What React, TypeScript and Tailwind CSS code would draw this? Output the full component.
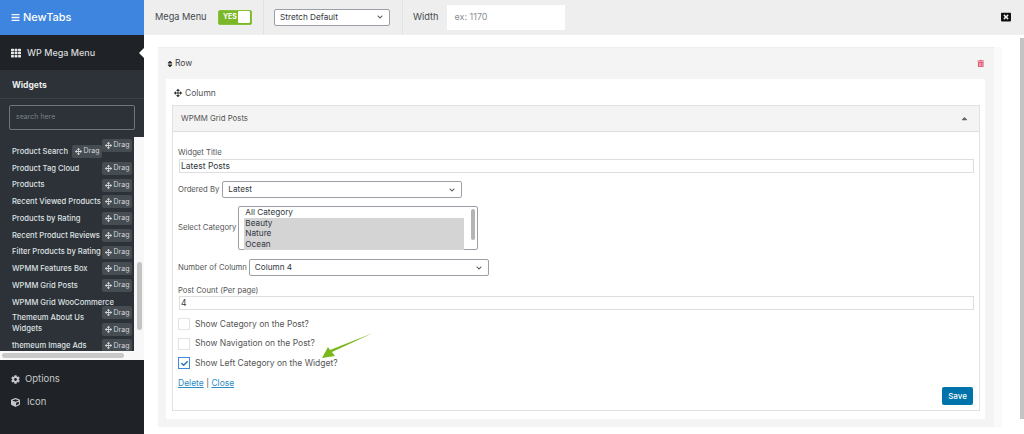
import React from "react";
import { FaArrowsAlt, FaBars, FaCaretUp, FaCheck, FaChevronDown, FaCog, FaCube, FaSort, FaTh, FaTrashAlt, FaWindowClose } from "react-icons/fa";

const widgets = [
  { name: "Product Tag Cloud" },
  { name: "Products" },
  { name: "Recent Viewed Products" },
  { name: "Products by Rating" },
  { name: "Recent Product Reviews" },
  { name: "Filter Products by Rating" },
  { name: "WPMM Features Box" },
  { name: "WPMM Grid Posts" },
];

const DragButton = () => (
  <span className="flex h-[13px] w-[30px] shrink-0 items-center justify-center gap-[2px] rounded-[2px] bg-[#454c52] text-[7px] font-normal text-[#d5d7d9]">
    <FaArrowsAlt className="text-[7px]" />
    Drag
  </span>
);

const SelectBox = ({ value, className }: { value: string; className: string }) => (
  <div className={`flex h-[17px] items-center justify-between rounded-[2px] border border-[#9aa0a6] bg-white pr-[6px] pl-[5px] text-[8.2px] text-[#32373c] ${className}`}>
    {value}
    <FaChevronDown className="text-[6px] text-[#555]" />
  </div>
);

const CheckRow = ({ label, checked }: { label: string; checked?: boolean }) => (
  <div className="flex h-[12px] items-center gap-[5px] text-[8.5px] text-[#555]">
    <span className={`flex h-[12px] w-[12px] items-center justify-center border bg-white ${checked ? "border-[#3f87e0]" : "border-[#e3e3e3]"}`}>
      {checked && <FaCheck className="text-[7px] text-[#1e73be]" />}
    </span>
    {label}
  </div>
);

const Sidebar = () => (
  <aside className="flex h-full w-[144px] shrink-0 flex-col bg-[#f8f8f8]">
    <div className="flex h-[35px] items-center gap-[3px] bg-[#3d85de] pl-[11px] text-[11px] font-medium text-white">
      <FaBars className="text-[9px]" />
      NewTabs
    </div>
    <div className="relative flex h-[35px] items-center gap-[6px] bg-[#1f2327] pl-[11px] text-[9px] font-medium text-[#d8dadc]">
      <FaTh className="text-[10px] text-[#e8e8e8]" />
      WP Mega Menu
      <span className="absolute top-[13px] right-0 h-0 w-0 border-y-[5px] border-r-[5px] border-y-transparent border-r-white" />
    </div>
    <div className="bg-[#2c3238]">
      <div className="flex h-[29px] items-center border-b border-[#3a4046] pt-[2px] pl-[12px] text-[8.5px] font-bold text-[#eceded]">
        Widgets
      </div>
      <div className="h-[38px] pt-[6px] pl-[9px]">
        <div className="flex h-[25px] w-[126px] items-center rounded-[2px] border border-[#70767b] pl-[6px] text-[7px] text-[#7b8186]">
          search here
        </div>
      </div>
    </div>
    <div className="flex h-[214px] overflow-hidden">
      <div className="flex h-full w-[134px] shrink-0 flex-col overflow-hidden bg-[#2c3238] pl-[12px] text-[7.6px] font-medium text-[#dfe1e2]">
        <div className="relative flex h-[23px] shrink-0 items-end pb-[2px]">
          <span className="absolute top-[2px] right-[2px]">
            <DragButton />
          </span>
          <span className="flex h-[13px] items-center gap-[4px]">
            Product Search
            <DragButton />
          </span>
        </div>
        {widgets.map((w) => (
          <div key={w.name} className="flex h-[16.75px] shrink-0 items-center justify-between pr-[2px] whitespace-nowrap">
            {w.name}
            <DragButton />
          </div>
        ))}
        <div className="flex h-[16.75px] shrink-0 items-center whitespace-nowrap">WPMM Grid WooCommerce</div>
        <div className="flex h-[27px] shrink-0 justify-between pr-[2px] leading-[11px]">
          <span className="pt-[1px]">
            Themeum About Us
            <br />
            Widgets
          </span>
          <div className="-mt-[5px] flex flex-col gap-[4px]">
            <DragButton />
            <DragButton />
          </div>
        </div>
        <div className="flex h-[16px] shrink-0 items-center justify-between pr-[2px]">
          themeum Image Ads
          <DragButton />
        </div>
      </div>
      <div className="flex-1 pt-[125px] pl-[3px]">
        <div className="h-[68px] w-[5px] rounded-full bg-[#c4c4c4]" />
      </div>
    </div>
    <div className="h-[9px] pt-[2px] pl-[2px]">
      <div className="h-[5px] w-[122px] rounded-full bg-[#c8c8c8]" />
    </div>
    <div className="flex flex-1 flex-col gap-[8px] bg-[#1f2327] pt-[12px] pl-[11px] text-[9.5px] text-[#c4c7c9]">
      <div className="flex h-[15px] items-center gap-[5px]">
        <FaCog className="text-[9px]" />
        Options
      </div>
      <div className="flex h-[15px] items-center gap-[7px]">
        <FaCube className="text-[9px]" />
        Icon
      </div>
    </div>
  </aside>
);

const TopBar = () => (
  <div className="flex h-[35px] shrink-0 items-center border-b border-[#f0f0f0] bg-[#eeeeee] text-[9.2px] text-[#44494e]">
    <div className="flex h-full w-[120px] items-center justify-between border-r border-[#e2e2e2] pr-[11px] pl-[11px]">
      Mega Menu
      <div className="flex h-[15px] w-[34px] items-center justify-between rounded-[2px] border border-[#84c33a] bg-[#7ab829] pr-[1px] pl-[4px] text-[7px] font-bold text-white">
        YES
        <span className="h-[12px] w-[12px] rounded-[1px] bg-white" />
      </div>
    </div>
    <div className="flex h-full w-[139px] items-center border-r border-[#e2e2e2] pl-[10px]">
      <SelectBox value="Stretch Default" className="w-[116px]" />
    </div>
    <span className="ml-[10px]">Width</span>
    <div className="ml-[9px] flex h-[25px] w-[118px] items-center bg-white pl-[7px] text-[9px] text-[#8a8f94]">ex: 1170</div>
    <FaWindowClose className="mr-[13px] ml-auto text-[10px] text-[#111]" />
  </div>
);

const FormCard = () => (
  <div className="relative ml-[6px] h-[306px] w-[808px] shrink-0 border border-[#e1e1e1] bg-white">
    <div className="flex h-[26px] items-center justify-between border-b border-[#dcdcdc] bg-[#f4f4f4] pr-[10px] pl-[8px] text-[7.8px] text-[#555]">
      WPMM Grid Posts
      <FaCaretUp className="text-[9px] text-[#666]" />
    </div>
    <div className="flex flex-col pl-[5px] text-[7.7px] text-[#555]">
      <span className="mt-[15px] leading-[11px]">Widget Title</span>
      <div className="mt-[1px] ml-[1px] flex h-[14px] w-[795px] items-center border border-[#dedede] bg-white pl-[1px] text-[8.5px] text-[#32373c]">
        Latest Posts
      </div>
      <div className="mt-[8px] flex items-center gap-[3px]">
        Ordered By
        <SelectBox value="Latest" className="w-[240px]" />
      </div>
      <div className="mt-[8px] flex items-center gap-[2px]">
        Select Category
        <div className="flex h-[44px] w-[240px] rounded-[2px] border border-[#9aa0a6] bg-white pl-[5px] text-[8.2px] leading-[10.6px] text-[#32373c]">
          <div className="w-[220px]">
            <div className="pl-[1px]">All Category</div>
            <div className="bg-[#d4d4d4] pl-[1px]">Beauty</div>
            <div className="bg-[#d4d4d4] pl-[1px]">Nature</div>
            <div className="h-[11px] bg-[#d4d4d4] pl-[1px]">Ocean</div>
          </div>
          <div className="mt-[2px] ml-[7px] h-[31px] w-[4px] rounded-full bg-[#b5b5b5]" />
        </div>
      </div>
      <div className="mt-[9px] flex items-center gap-[2px]">
        Number of Column
        <SelectBox value="Column 4" className="w-[240px]" />
      </div>
      <span className="mt-[9px] leading-[11px]">Post Count (Per page)</span>
      <div className="ml-[1px] flex h-[14px] w-[795px] items-center border border-[#dedede] bg-white pl-[1px] text-[8.5px] text-[#32373c]">
        4
      </div>
      <div className="mt-[8px] flex flex-col gap-[7.5px]">
        <CheckRow label="Show Category on the Post?" />
        <CheckRow label="Show Navigation on the Post?" />
        <CheckRow label="Show Left Category on the Widget?" checked />
      </div>
      <div className="mt-[9px] text-[8.5px] leading-[11px]">
        <span className="text-[#2e8cc0] underline">Delete</span> | <span className="text-[#2e8cc0] underline">Close</span>
      </div>
    </div>
    <div className="absolute right-[6px] bottom-[5px] flex h-[18px] w-[31px] items-center justify-center rounded-[2px] bg-[#0073aa] text-[8px] font-medium text-white">
      Save
    </div>
    <svg className="absolute top-[226px] left-[145px]" width="56" height="30" viewBox="0 0 56 30">
      <path d="M55 1 L14 20 L17 24 L4 26 L10 15 L12 18 Z" fill="#7ab81d" />
    </svg>
  </div>
);

export default function App() {
  return (
    <div className="flex h-[434px] w-[1024px] overflow-hidden bg-white font-['Inter',sans-serif]">
      <Sidebar />
      <main className="flex h-full min-w-0 flex-1 flex-col">
        <TopBar />
        <div className="flex min-h-0 flex-1">
          <div className="flex-1 pt-[12px] pl-[14px]">
            <div className="flex w-[844px]">
              <div className="flex h-[380px] w-[836px] flex-col border-t border-[#eeeeee] bg-[#f4f4f4] pl-[8px]">
                <div className="flex h-[31px] shrink-0 items-center justify-between pr-[10px] pl-0 text-[8.5px] text-[#444]">
                  <span className="flex items-center gap-[1px]">
                    <FaSort className="text-[8px] text-[#222]" />
                    Row
                  </span>
                  <FaTrashAlt className="text-[7.5px] text-[#e2566f]" />
                </div>
                <div className="flex h-[340px] w-[819px] flex-col bg-white">
                  <div className="flex h-[26px] shrink-0 items-center gap-[3px] pt-[2px] pl-[8px] text-[8.5px] text-[#555]">
                    <FaArrowsAlt className="text-[8px] text-[#333]" />
                    Column
                  </div>
                  <FormCard />
                </div>
              </div>
              <div className="h-[380px] w-[8px] bg-[#fafafa]" />
            </div>
          </div>
          <div className="w-[7px] pt-[3px] pl-[3px]">
            <div className="h-[381px] w-[4px] bg-[#c4c4c4]" />
          </div>
        </div>
      </main>
    </div>
  );
}
